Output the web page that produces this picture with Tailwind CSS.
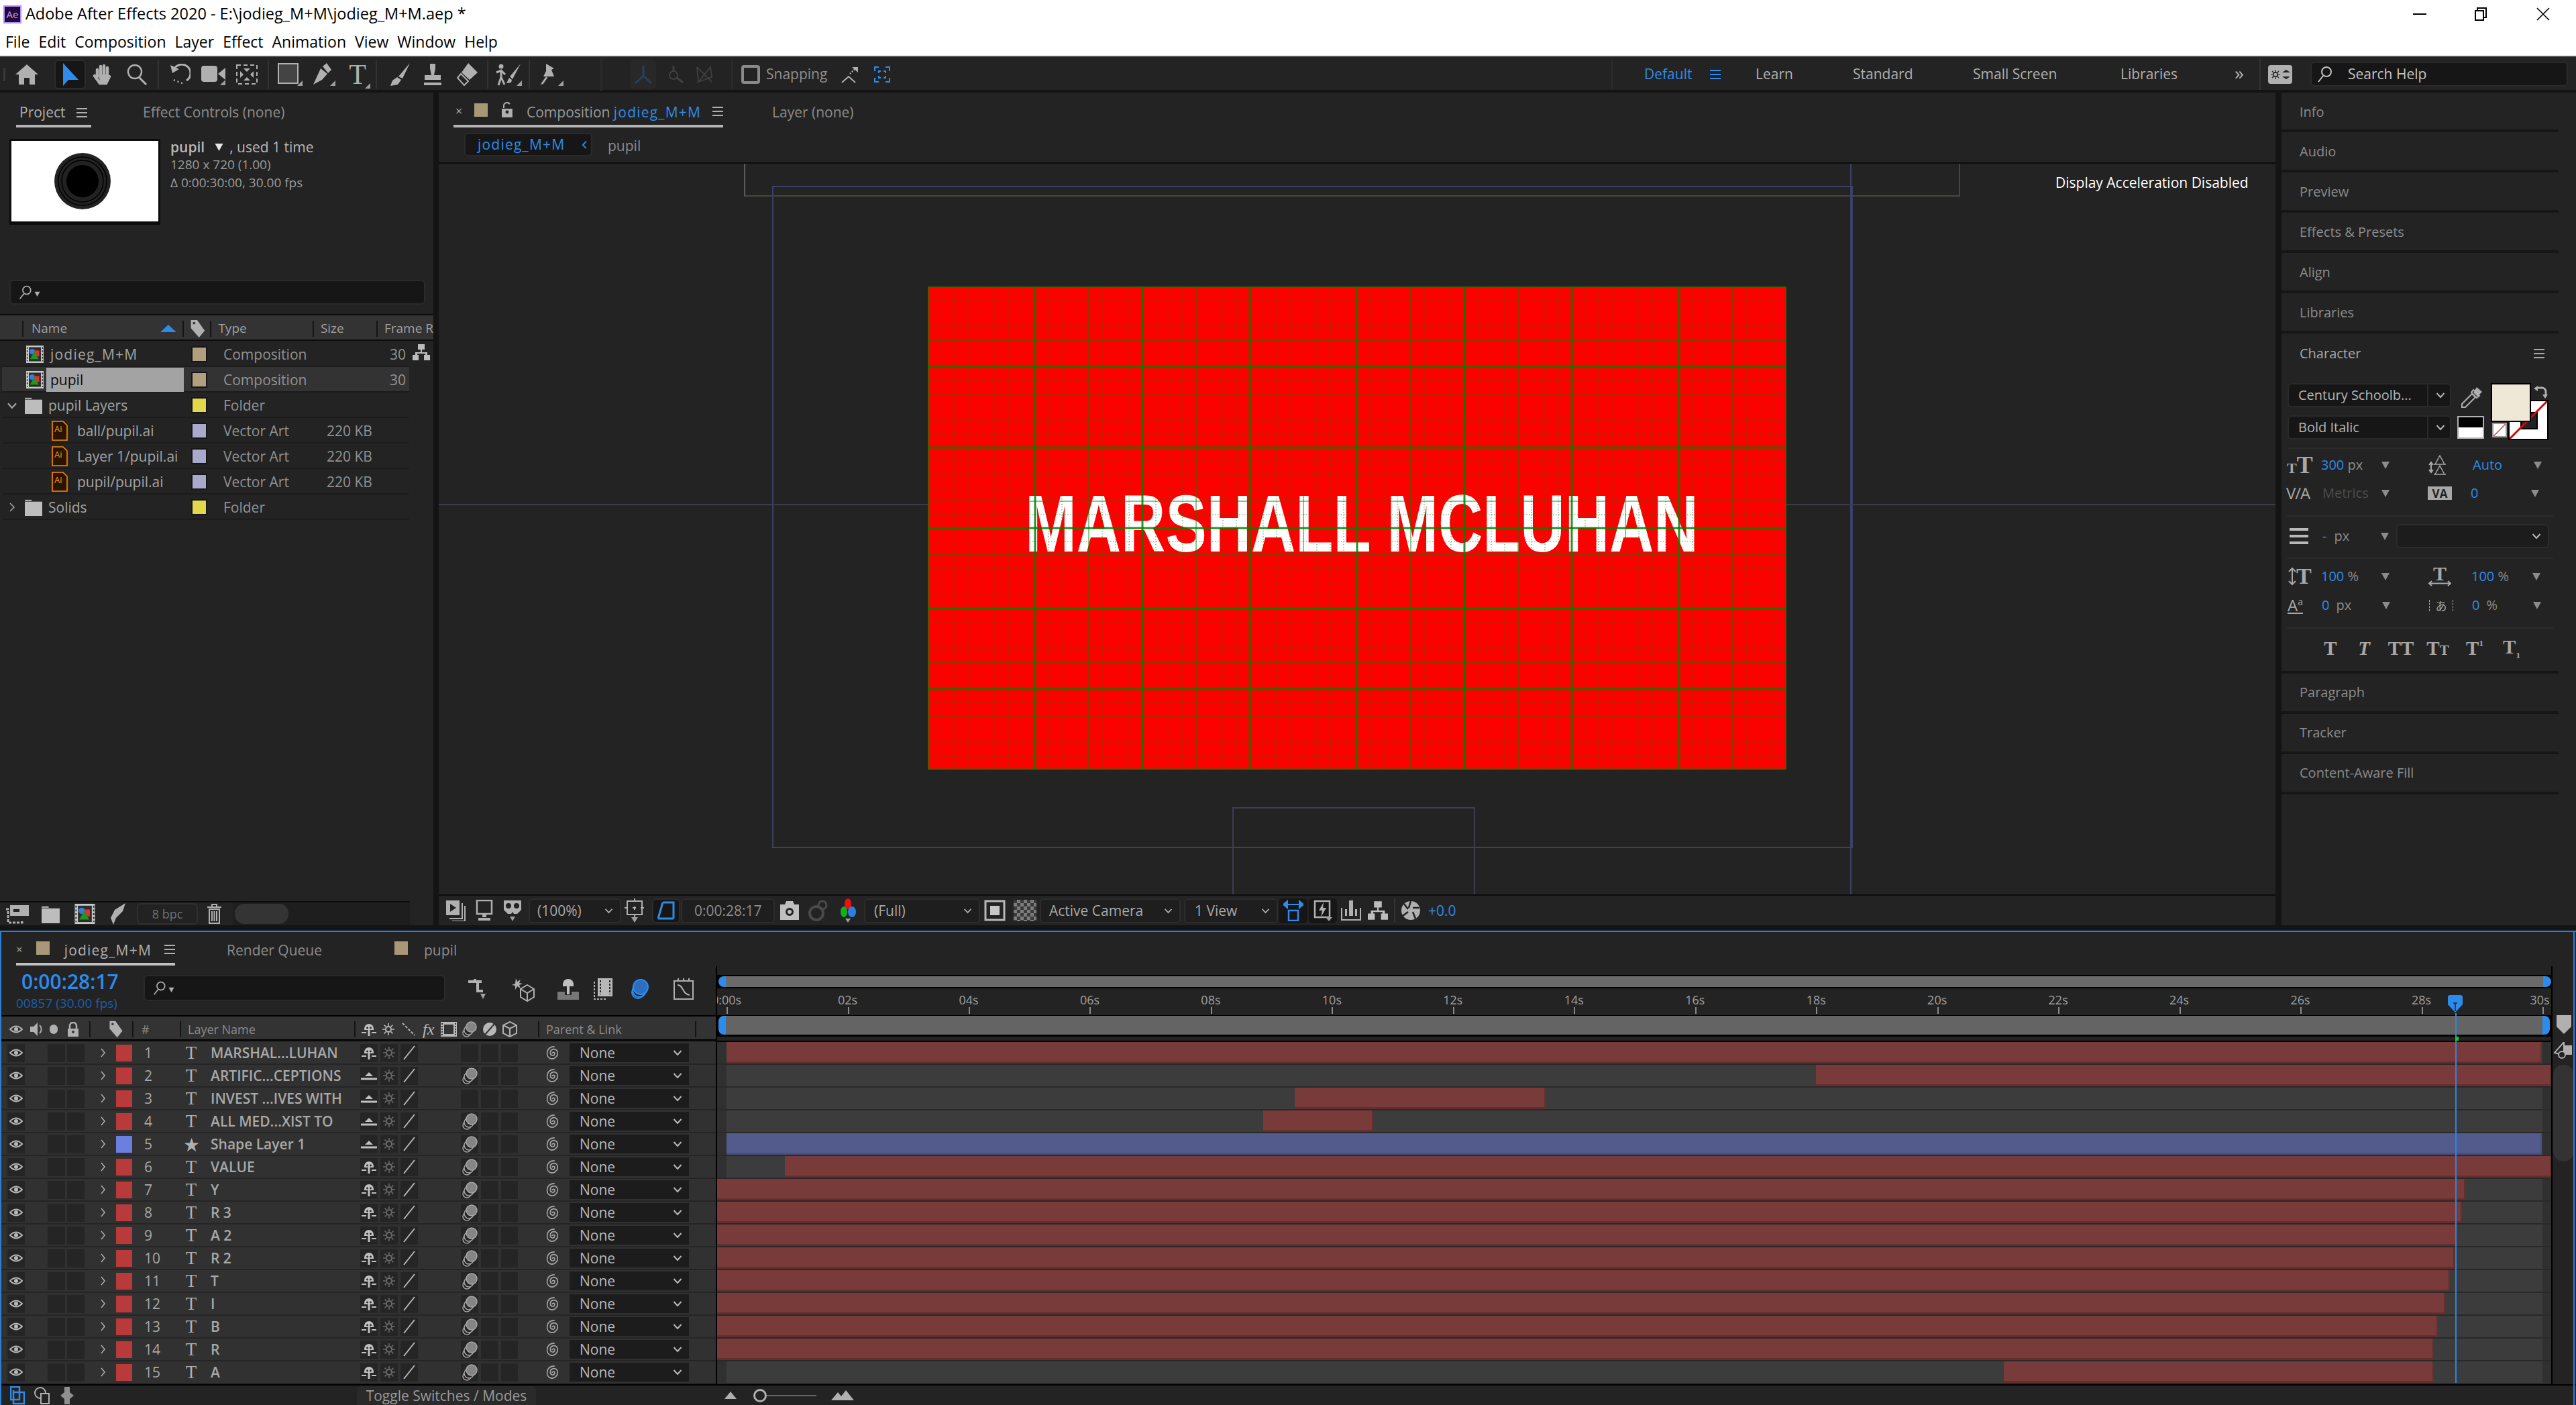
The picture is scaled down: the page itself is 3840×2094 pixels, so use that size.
<!DOCTYPE html>
<html lang="en">
  <head>
    <meta charset="UTF-8" />
    <title>Adobe After Effects 2020</title>
    <script src="https://cdn.jsdelivr.net/npm/@tailwindcss/browser@4"></script>
  </head>
  <body class="w-[3840px] h-[2094px] overflow-hidden bg-[#141414] font-['Open_Sans',sans-serif] text-[21px] leading-none text-[#a3a3a3]">
    <!-- shared icons -->
    <svg class="absolute w-0 h-0">
      <symbol id="tri" viewBox="0 0 12 12"><path d="M0 1H12L6 12Z" fill="currentColor" /></symbol>
      <symbol id="flyout" viewBox="0 0 8 8"><path d="M8 0V8H0Z" fill="#a0a0a0" /></symbol>
      <symbol id="chev" viewBox="0 0 14 10"><path d="M1.5 2L7 8L12.5 2" fill="none" stroke="currentColor" stroke-width="2" /></symbol>
      <symbol id="menu" viewBox="0 0 16 16"><path d="M0 2H16M0 8H16M0 14H16" stroke="currentColor" stroke-width="2" /></symbol>
      <symbol id="search" viewBox="0 0 26 26"><circle cx="14" cy="9" r="7" fill="none" stroke="currentColor" stroke-width="2" /><path d="M9 15L2 24" stroke="currentColor" stroke-width="2" /></symbol>
      <symbol id="eye" viewBox="0 0 20 12"><path d="M1 6Q10 -3 19 6Q10 15 1 6Z" fill="none" stroke="#b8b8b8" stroke-width="2" /><circle cx="10" cy="6" r="3" fill="#b8b8b8" /></symbol>
      <symbol id="shy" viewBox="0 0 24 20"><path d="M5 9A7 7 0 0 1 19 9V11H5Z" fill="#c0c0c0" /><path d="M12 11V20" stroke="#c0c0c0" stroke-width="3" /><path d="M1 15H8M16 15H23" stroke="#c0c0c0" stroke-width="2" /><circle cx="9.5" cy="8" r="1.4" fill="#252525" /><circle cx="14.5" cy="8" r="1.4" fill="#252525" /></symbol>
      <symbol id="shyoff" viewBox="0 0 24 20"><path d="M6 11L12 5L18 11Z" fill="#c0c0c0" /><path d="M0 15H24" stroke="#c0c0c0" stroke-width="3" /></symbol>
      <symbol id="sun" viewBox="0 0 18 18"><circle cx="9" cy="9" r="4" fill="none" stroke="currentColor" stroke-width="2" /><path d="M9 0V4M9 14V18M0 9H4M14 9H18M2.6 2.6L5.5 5.5M12.5 12.5L15.4 15.4M2.6 15.4L5.5 12.5M12.5 5.5L15.4 2.6" stroke="currentColor" stroke-width="1.6" /></symbol>
      <symbol id="slash" viewBox="0 0 24 22"><path d="M4 21L20 1" stroke="#b8b8b8" stroke-width="2" /></symbol>
      <symbol id="stack" viewBox="0 0 25 25"><circle cx="8" cy="18" r="6" fill="#252525" stroke="#a8a8a8" stroke-width="1.5" /><circle cx="11" cy="14" r="7" fill="#252525" stroke="#a8a8a8" stroke-width="1.5" /><circle cx="15" cy="9" r="8" fill="#858585" stroke="#a8a8a8" stroke-width="1.5" /></symbol>
      <symbol id="spiral" viewBox="0 0 24 24"><path d="M11 13C12 10 16 11 15 14C14 18 8 17 8 12C8 6 16 4 19 9C22 15 17 22 10 22C5 21 2 17 3 11C4 5 9 2 15 2" fill="none" stroke="#a8a8a8" stroke-width="1.8" /></symbol>
      <symbol id="comp" viewBox="0 0 32 32"><rect x="0" y="0" width="32" height="32" fill="#c8c8c8" /><rect x="5" y="3" width="22" height="26" fill="#2c2c2c" /><path d="M2 3V29M30 3V29" stroke="#2c2c2c" stroke-width="2" stroke-dasharray="3 3" /><circle cx="11" cy="11" r="5" fill="#2d7fe0" /><rect x="15" y="9" width="9" height="11" fill="#e03030" /><path d="M15 11L23 25H7Z" fill="#1a9a20" /></symbol>
      <symbol id="ai" viewBox="0 0 24 30"><path d="M1 1H17L23 7V29H1Z" fill="#2a1400" stroke="#ff8a00" stroke-width="1.6" /></symbol>
      <symbol id="folder" viewBox="0 0 28 28"><path d="M0 4H11V2H0Z" fill="#bdbdbd" /><rect x="0" y="5" width="28" height="23" fill="#bdbdbd" /></symbol>
      <symbol id="tag" viewBox="0 0 24 30"><path d="M1 1H11L23 18L14 29L1 14Z" fill="#b0b0b0" /><circle cx="6" cy="6" r="2" fill="#333" /></symbol>
      <symbol id="tree" viewBox="0 0 26 24"><path d="M8 0H18V8H14V12H22V16H26V24H17V16H19V14H7V16H9V24H0V16H4V12H12V8H8Z" fill="#bdbdbd" /></symbol>
    </svg>

    <!-- title and menu -->
    <div class="h-[42px] bg-white flex items-center text-black">
      <span class="ml-[5px] w-[27px] h-[27px] bg-[#1f0a3a] border-2 border-[#b48cff] text-[#c79aff] text-[15px] flex items-center justify-center">Ae</span>
      <span class="ml-[6px] text-[23.5px]">Adobe After Effects 2020 - E:\jodieg_M+M\jodieg_M+M.aep *</span>
      <svg class="ml-auto w-[20px] h-[20px]" viewBox="0 0 20 20"><path d="M0 10H20" stroke="#000" stroke-width="2" /></svg>
      <svg class="ml-[70px] w-[20px] h-[20px]" viewBox="0 0 20 20"><path d="M3 5H15V19H3ZM6 5V1H19V15H15" fill="none" stroke="#000" stroke-width="2" /></svg>
      <svg class="ml-[74px] mr-[39px] w-[20px] h-[20px]" viewBox="0 0 20 20"><path d="M1 1L19 19M19 1L1 19" stroke="#000" stroke-width="1.6" /></svg>
    </div>
    <div class="h-[40px] bg-white flex items-center gap-[13px] pl-[8px] text-black text-[23px]">
      <span>File</span><span>Edit</span><span>Composition</span><span>Layer</span><span>Effect</span><span>Animation</span><span>View</span><span>Window</span><span>Help</span>
    </div>
    <div class="h-[2px] bg-[#e6e6e6]"></div>

    <!-- tools -->
    <div class="h-[50px] pt-[3px] bg-[#232323] flex items-center text-[#b0b0b0]">
      <div class="w-[15px]"><div class="ml-[5px] w-[3px] h-[20px] bg-[#3a3a3a]"></div></div>
      <div class="w-[50px] flex justify-center"><svg class="w-[34px] h-[30px]" viewBox="0 0 34 30"><path d="M17 0L34 15H29V30H21V20H13V30H5V15H0Z" fill="#b0b0b0" /></svg></div>
      <div class="ml-[16px] w-[47px] h-[44px] bg-[#161616] border-2 border-[#2c2c2c] rounded-md flex items-center justify-center"><svg class="w-[25px] h-[34px]" viewBox="0 0 25 34"><path d="M2 0V34L10 25H25Z" fill="#2d8ceb" /></svg></div>
      <div class="w-[50px] flex justify-center"><svg class="w-[32px] h-[32px]" viewBox="0 0 32 32"><path d="M8 9V20M13 4V18M18 3V18M23 6V19M4 18L12 29H21L26 19" fill="none" stroke="#b0b0b0" stroke-width="4.5" stroke-linecap="round" /><path d="M10 16H24V27H12Z" fill="#b0b0b0" /></svg></div>
      <div class="w-[52px] flex justify-center"><svg class="w-[34px] h-[32px]" viewBox="0 0 34 32"><circle cx="14" cy="12" r="10" fill="none" stroke="#b0b0b0" stroke-width="2.4" /><path d="M20 20L31 31" stroke="#b0b0b0" stroke-width="3" /></svg></div>
      <div class="ml-[5px] mr-[5px] w-[2px] h-[42px] bg-[#333]"></div>
      <div class="w-[52px] flex justify-center"><svg class="w-[32px] h-[32px]" viewBox="0 0 32 32"><path d="M7 9A13 13 0 1 1 26 25" fill="none" stroke="#b0b0b0" stroke-width="3" /><path d="M2 2L5 14L15 8Z" fill="#b0b0b0" /><path d="M20 29L6 24" stroke="#b0b0b0" stroke-width="2.5" stroke-dasharray="2 4" /></svg></div>
      <div class="w-[48px] flex justify-center"><svg class="w-[36px] h-[32px]" viewBox="0 0 36 32"><rect x="0" y="3" width="24" height="24" rx="4" fill="#b0b0b0" /><path d="M25 15L36 6V24Z" fill="#b0b0b0" /><path d="M36 24V32H28Z" fill="#a0a0a0" /></svg></div>
      <div class="w-[52px] flex justify-center"><svg class="w-[32px] h-[30px]" viewBox="0 0 32 30"><rect x="1" y="1" width="30" height="28" fill="none" stroke="#b0b0b0" stroke-width="2" stroke-dasharray="6 4" /><path d="M11 6H21L16 11ZM11 24H21L16 19ZM6 10V20L11 15ZM26 10V20L21 15Z" fill="#b0b0b0" /></svg></div>
      <div class="ml-[5px] mr-[5px] w-[2px] h-[42px] bg-[#333]"></div>
      <div class="w-[52px] flex justify-center"><svg class="w-[38px] h-[34px]" viewBox="0 0 38 34"><rect x="2" y="1" width="29" height="29" fill="#444" stroke="#b0b0b0" stroke-width="2" /><path d="M38 26V34H30Z" fill="#a0a0a0" /></svg></div>
      <div class="w-[48px] flex justify-center"><svg class="w-[36px] h-[34px]" viewBox="0 0 36 34"><path d="M14 8L3 32L16 25L24 16ZM17 5L23 0L30 10L25 15Z" fill="#b0b0b0" /><path d="M36 26V34H28Z" fill="#a0a0a0" /></svg></div>
      <div class="w-[54px] flex justify-center items-center relative"><span class="font-['Liberation_Serif',serif] text-[42px] text-[#b0b0b0]">T</span><svg class="absolute right-[8px] bottom-0 w-[8px] h-[8px]"><use href="#flyout" /></svg></div>
      <div class="mr-[6px] w-[2px] h-[42px] bg-[#333]"></div>
      <div class="w-[56px] flex justify-center"><svg class="w-[34px] h-[34px]" viewBox="0 0 34 34"><path d="M32 0L15 20L21 23ZM13 21L6 26L3 34L14 32L19 25Z" fill="#b0b0b0" /></svg></div>
      <div class="w-[42px] flex justify-center"><svg class="w-[32px] h-[34px]" viewBox="0 0 32 34"><path d="M12 1H20V8L18 18H28V25H4V18H14L12 8ZM3 29H29V33H3Z" fill="#b0b0b0" /></svg></div>
      <div class="w-[60px] flex justify-center"><svg class="w-[32px] h-[34px]" viewBox="0 0 32 34"><path d="M18 0L32 14L20 25L8 14Z" fill="#b0b0b0" /><path d="M7 16L18 27L12 33L2 22Z" fill="none" stroke="#b0b0b0" stroke-width="2" /></svg></div>
      <div class="w-[2px] h-[42px] bg-[#333]"></div>
      <div class="w-[60px] flex justify-center"><svg class="w-[40px] h-[34px]" viewBox="0 0 40 34"><circle cx="9" cy="5" r="3.5" fill="#b0b0b0" /><path d="M9 10V21L5 33M9 21L14 32M2 14L9 11L15 17" fill="none" stroke="#b0b0b0" stroke-width="3" /><path d="M38 1L22 20L26 24ZM21 22L17 30L24 29L25 25Z" fill="#b0b0b0" /><path d="M40 26V34H32Z" fill="#a0a0a0" /></svg></div>
      <div class="w-[2px] h-[42px] bg-[#333]"></div>
      <div class="w-[62px] flex justify-center"><svg class="w-[38px] h-[34px]" viewBox="0 0 38 34"><path d="M12 1L24 8L20 10L24 20H8L12 12ZM13 21L8 30L3 33" fill="#b0b0b0" /><path d="M13 21L6 31" stroke="#b0b0b0" stroke-width="3" /><path d="M38 26V34H30Z" fill="#a0a0a0" /></svg></div>
      <div class="ml-[43px] w-[3px] h-[50px] bg-[#2a2a2a]"></div>
      <div class="ml-[41px] w-[39px] h-[44px] bg-[#282828] rounded-md flex items-center justify-center"><svg class="w-[30px] h-[30px]" viewBox="0 0 30 30"><path d="M15 2V17M15 17L3 28M15 17L27 28" stroke="#25415f" stroke-width="3" fill="none" /></svg></div>
      <div class="w-[60px] flex justify-center"><svg class="w-[24px] h-[26px]" viewBox="0 0 24 26"><circle cx="8" cy="14" r="6" fill="none" stroke="#414141" stroke-width="2" /><path d="M13 18L22 25M8 0V8" stroke="#414141" stroke-width="3" /></svg></div>
      <svg class="w-[24px] h-[28px]" viewBox="0 0 24 28"><path d="M1 3L3 25M3 25L23 18L21 3ZM1 3L23 25" fill="none" stroke="#3d3d3d" stroke-width="2" /></svg>
      <div class="ml-[28px] w-[2px] h-[42px] bg-[#2d2d2d]"></div>
      <div class="ml-[13px] w-[28px] h-[28px] border-4 border-[#8a8a8a] rounded"></div>
      <span class="ml-[9px] w-[92px] text-[#8f8f8f]">Snapping</span>
      <svg class="ml-[20px] w-[25px] h-[26px]" viewBox="0 0 25 26"><path d="M1 25L11 16L21 25" fill="none" stroke="#b0b0b0" stroke-width="2" /><path d="M13 12L20 5" stroke="#b0b0b0" stroke-width="2" stroke-dasharray="2 2" /><path d="M16 2H25V10Z" fill="#b0b0b0" /></svg>
      <svg class="ml-[24px] w-[24px] h-[24px]" viewBox="0 0 24 24"><path d="M7 1H1V7M17 1H23V7M7 23H1V17M17 23H23V17M10 7H7V10M14 7H17V10M10 17H7V14M14 17H17V14" fill="none" stroke="#2d8ceb" stroke-width="2" /></svg>
      <div class="ml-[1075px] w-[2px] h-[42px] bg-[#2d2d2d]"></div>
      <span class="ml-[47px] w-[98px] text-[#2d8ceb]">Default</span>
      <svg class="w-[16px] h-[16px] text-[#2d8ceb]"><use href="#menu" /></svg>
      <span class="ml-[52px] w-[145px]">Learn</span>
      <span class="w-[179px]">Standard</span>
      <span class="w-[220px]">Small Screen</span>
      <span class="w-[170px]">Libraries</span>
      <span class="w-[37px] text-[28px] -mt-[6px]">»</span>
      <div class="w-[2px] h-[47px] bg-[#333]"></div>
      <div class="ml-[11px] w-[36px] h-[28px] bg-[#b0b0b0] rounded-sm flex items-center justify-center gap-[3px]"><svg class="w-[14px] h-[14px] text-[#232323]"><use href="#sun" /></svg><svg class="w-[12px] h-[14px]" viewBox="0 0 12 14"><path d="M6 0L0 4H12ZM6 14L12 10H0Z" fill="#232323" /></svg></div>
      <div class="ml-[27px] w-[384px] h-[37px] bg-[#161616] border-2 border-[#2a2a2a] rounded-md flex items-center pl-[8px] text-[#c4c4c4]">
        <svg class="w-[26px] h-[26px]"><use href="#search" /></svg><span class="ml-[20px]">Search Help</span>
      </div>
    </div>
    <div class="h-[4px]"></div>

    <!-- panels -->
    <div class="h-[1241px] flex">
      <!-- project -->
      <div class="w-[646px] h-full bg-[#232323] flex flex-col">
        <div class="h-[52px] flex items-end pl-[24px] relative shrink-0">
          <div class="w-[112px] h-[52px] border-b-4 border-[#b4b4b4] flex items-start pt-[19px] gap-[16px] pl-[5px] text-[#b0b0b0]"><span>Project</span><svg class="w-[16px] h-[16px] mt-[3px]"><use href="#menu" /></svg></div>
          <span class="ml-[77px] self-start mt-[19px] text-[#8c8c8c]">Effect Controls (none)</span>
        </div>
        <div class="mt-[17px] ml-[14px] flex h-[128px] shrink-0">
          <div class="w-[225px] h-full bg-white border-[3px] border-[#0c0c0c] border-b-[5px] flex items-center justify-center pr-[8px]">
            <svg class="w-[90px] h-[90px]" viewBox="0 0 90 90"><circle cx="45" cy="45" r="42" fill="#222" /><circle cx="45" cy="45" r="36" fill="none" stroke="#000" stroke-width="1.5" /><circle cx="45" cy="45" r="31" fill="none" stroke="#000" stroke-width="1.5" /><circle cx="45" cy="45" r="24" fill="#000" /></svg>
          </div>
          <div class="ml-[15px] flex flex-col">
            <div class="flex items-center h-[24px] text-[#b8b8b8]"><span class="font-semibold">pupil</span><svg class="ml-[14px] mr-[8px] w-[15px] h-[12px] text-[#e6e6e6]"><use href="#tri" /></svg><span>, used 1 time</span></div>
            <div class="mt-[5px] text-[19px] text-[#9c9c9c]">1280 x 720 (1.00)</div>
            <div class="mt-[8px] text-[19px] text-[#9c9c9c]">Δ 0:00:30:00, 30.00 fps</div>
          </div>
        </div>
        <div class="mt-[82px] ml-[14px] w-[620px] h-[37px] bg-[#161616] border-2 border-[#2a2a2a] rounded-md flex items-center pl-[12px] shrink-0">
          <svg class="w-[22px] h-[22px] text-[#b0b0b0]"><use href="#search" /></svg><svg class="w-[11px] h-[8px] mt-[5px] text-[#b0b0b0]"><use href="#tri" /></svg>
        </div>
        <div class="mt-[14px] h-[40px] pt-[3px] border-y-2 border-[#0c0c0c] bg-[#333] flex items-center text-[19px] text-[#a0a0a0] shrink-0 overflow-hidden">
          <div class="ml-[33px] w-[2px] h-[24px] bg-[#141414]"></div><span class="ml-[12px] w-[194px]">Name</span><svg class="w-[24px] h-[11px] text-[#2d8ceb]" viewBox="0 0 24 11"><path d="M12 0L24 11H0Z" fill="currentColor" /></svg>
          <div class="ml-[9px] w-[2px] h-[24px] bg-[#141414]"></div><svg class="ml-[9px] w-[24px] h-[28px]"><use href="#tag" /></svg>
          <div class="ml-[7px] w-[2px] h-[24px] bg-[#141414]"></div><span class="ml-[10px] w-[142px]">Type</span>
          <div class="w-[2px] h-[24px] bg-[#141414]"></div><span class="ml-[10px] w-[84px]">Size</span>
          <div class="w-[2px] h-[24px] bg-[#141414]"></div><span class="ml-[10px] whitespace-nowrap">Frame R</span>
        </div>
        <div id="project-rows" class="ml-[3px] mt-[1px]"></div>
        <div class="flex-1"></div>
        <div class="h-[2px] w-[611px] bg-[#0c0c0c]"></div>
        <div class="h-[34px] flex items-center bg-[#232323]">
          <svg class="ml-[9px] w-[34px] h-[30px]" viewBox="0 0 34 30"><path d="M6 2H34V18H6Z" fill="#b0b0b0" /><path d="M11 8H20V12H11Z" fill="#232323" /><path d="M0 8H3V28H24V24" fill="none" stroke="#b0b0b0" stroke-width="3" stroke-dasharray="4 2" /></svg>
          <svg class="ml-[19px] w-[27px] h-[27px]"><use href="#folder" /></svg>
          <svg class="ml-[21px] w-[33px] h-[30px]"><use href="#comp" /></svg>
          <svg class="ml-[18px] w-[26px] h-[32px]" viewBox="0 0 26 32"><path d="M26 0L10 10L4 22L8 32L12 22L22 12Z" fill="#b0b0b0" /></svg>
          <div class="ml-[17px] w-[91px] h-[32px] border-2 border-[#2f2f2f] bg-[#222] rounded-md flex items-center justify-center text-[18px] text-[#6d7278]">8 bpc</div>
          <svg class="ml-[13px] w-[23px] h-[30px]" viewBox="0 0 23 30"><path d="M1 5H22M8 5V1H15V5M4 8V29H19V8Z" fill="none" stroke="#b0b0b0" stroke-width="2" /><path d="M8 11V26M11.5 11V26M15 11V26" stroke="#b0b0b0" stroke-width="2" /></svg>
          <div class="ml-[16px] h-full w-[264px] bg-[#1e1e1e] flex items-center"><div class="ml-[3px] w-[80px] h-[30px] bg-[#343434] rounded-[14px]"></div></div>
        </div>
      </div>

      <!-- composition -->
      <div class="ml-[8px] w-[2738px] h-full bg-[#232323] flex flex-col">
        <div class="h-[52px] shrink-0 flex items-start pl-[22px] relative">
          <div class="w-[402px] h-[52px] border-b-4 border-[#b4b4b4] flex items-start">
            <span class="ml-[3px] mt-[18px] text-[18px]">×</span>
            <div class="ml-[18px] mt-[16px] w-[20px] h-[20px] bg-[#a89878]"></div>
            <svg class="ml-[20px] mt-[14px] w-[18px] h-[24px]" viewBox="0 0 18 24"><path d="M4 9V5A5 5 0 0 1 13 3" fill="none" stroke="#b0b0b0" stroke-width="2" /><path d="M1 10H17V23H1Z" fill="#b0b0b0" /><circle cx="9" cy="15" r="2.5" fill="#232323" /></svg>
            <span class="ml-[20px] mt-[19px] text-[#9a9a9a] whitespace-nowrap">Composition <span class="text-[#2d8ceb] tracking-[1.2px]">jodieg_M+M</span></span>
            <svg class="ml-[17px] mt-[20px] w-[16px] h-[16px] text-[#b0b0b0]"><use href="#menu" /></svg>
          </div>
          <span class="ml-[73px] mt-[19px] text-[#8c8c8c]">Layer (none)</span>
        </div>
        <div class="h-[54px] pt-[3px] shrink-0 flex items-center pl-[38px] border-b-2 border-[#0c0c0c]">
          <div class="w-[191px] h-[35px] -mt-[4px] bg-[#161616] border-2 border-[#2a2a2a] rounded-md flex items-center pl-[18px] text-[#2d8ceb]"><span class="w-[155px] tracking-[1.2px]">jodieg_M+M</span><span class="font-['Liberation_Sans',sans-serif] text-[26px] -mt-[4px]">‹</span></div>
          <span class="ml-[23px] text-[#8c8c8c]">pupil</span>
        </div>
        <!-- viewer -->
        <div class="relative flex-1 overflow-hidden">
          <div class="absolute left-[455px] top-0 w-[1813px] h-[49px] border-l-2 border-r-2 border-b-2 border-[#4a463c] border-l-[#5a5a5a]"></div>
          <div class="absolute left-[497px] top-[33px] w-[1611px] h-[987px] border-2 border-[#3c3f66]"></div>
          <div class="absolute left-[1183px] top-[959px] w-[362px] h-[140px] border-2 border-[#3c3d50]"></div>
          <div class="absolute left-0 top-[507px] w-full h-[2px] bg-[#3a3b46]"></div>
          <div class="absolute left-[2104px] top-0 w-[2px] h-full bg-[#3c3f66]"></div>
          <div class="absolute left-[729px] top-[183px] w-[1280px] h-[720px] bg-[#ff0000] overflow-hidden flex items-center justify-center">
            <span class="whitespace-nowrap font-['Liberation_Sans',sans-serif] font-bold text-[121px] leading-none text-white scale-x-[0.759] translate-x-[7px] -translate-y-[7px]">MARSHALL MCLUHAN</span>
            <svg id="grid" class="absolute inset-0 w-[1280px] h-[720px]" viewBox="0 0 1280 720"></svg>
          </div>
          <span class="absolute left-[2410px] top-[18px] text-white text-[21px]">Display Acceleration Disabled</span>
        </div>
        <!-- viewer controls -->
        <div class="h-[46px] shrink-0 border-t-2 border-[#0c0c0c] flex items-center text-[#a8a8a8]">
          <svg class="ml-[10px] w-[30px] h-[32px]" viewBox="0 0 30 32"><path d="M1 1H21V23H1Z" fill="#b0b0b0" /><path d="M7 6L16 12L7 18Z" fill="#232323" /><path d="M25 5V28H6M29 9V32H10" fill="none" stroke="#b0b0b0" stroke-width="2" /></svg>
          <svg class="ml-[13px] w-[30px] h-[32px]" viewBox="0 0 30 32"><rect x="4" y="1" width="22" height="20" fill="none" stroke="#b0b0b0" stroke-width="2.5" /><path d="M12 22H18V26H12ZM6 27H24V31H6Z" fill="#b0b0b0" /></svg>
          <svg class="ml-[12px] w-[30px] h-[34px]" viewBox="0 0 30 34"><path d="M2 2H28V16L22 22H17L15 19L13 22H8L2 16Z" fill="#b0b0b0" /><circle cx="9" cy="10" r="4" fill="#232323" /><circle cx="21" cy="10" r="4" fill="#232323" /><path d="M11 26H19L15 33Z" fill="#a0a0a0" /></svg>
          <div class="ml-[9px] w-[138px] h-[37px] bg-[#1e1e1e] border-2 border-[#2c2c2c] rounded-md flex items-center pl-[11px]"><span class="flex-1">(100%)</span><svg class="w-[13px] h-[9px] mr-[10px]"><use href="#chev" /></svg></div>
          <svg class="ml-[5px] w-[30px] h-[36px]" viewBox="0 0 30 36"><rect x="4" y="4" width="22" height="20" fill="none" stroke="#b0b0b0" stroke-width="2" /><path d="M15 0V28M0 14H30" stroke="#b0b0b0" stroke-width="2" stroke-dasharray="5 7" /><path d="M10 28H20L15 36Z" fill="#a0a0a0" /></svg>
          <div class="ml-[11px] w-[42px] h-[37px] bg-[#161616] border-2 border-[#2c2c2c] rounded-md flex items-center justify-center"><svg class="w-[26px] h-[30px]" viewBox="0 0 26 30"><path d="M8 3L1 27M8 3H24V27M1 27H24" fill="none" stroke="#2d8ceb" stroke-width="3" /></svg></div>
          <div class="ml-[1px] w-[140px] h-[37px] bg-[#1e1e1e] border-2 border-[#2c2c2c] rounded-md flex items-center pl-[18px] text-[21px] text-[#8c8c8c]">0:00:28:17</div>
          <svg class="ml-[5px] w-[34px] h-[30px]" viewBox="0 0 34 30"><path d="M3 6H10L12 1H22L24 6H31V29H3Z" fill="#c0c0c0" /><circle cx="17" cy="17" r="6" fill="#232323" /><circle cx="17" cy="17" r="3" fill="#c0c0c0" /></svg>
          <svg class="ml-[10px] w-[32px] h-[32px]" viewBox="0 0 32 32"><circle cx="13" cy="20" r="10" fill="none" stroke="#4a4a4a" stroke-width="4" /><circle cx="22" cy="8" r="6" fill="none" stroke="#4a4a4a" stroke-width="3" /></svg>
          <svg class="ml-[12px] w-[32px] h-[36px]" viewBox="0 0 32 36"><ellipse cx="16" cy="8" rx="5" ry="8" fill="#f01010" /><ellipse cx="10" cy="20" rx="5" ry="8" fill="#10b020" /><ellipse cx="22" cy="20" rx="6" ry="8" fill="#2d7fe0" /><path d="M12 30H20L16 36Z" fill="#a0a0a0" /></svg>
          <div class="ml-[8px] w-[173px] h-[37px] bg-[#1e1e1e] border-2 border-[#2c2c2c] rounded-md flex items-center pl-[13px]"><span class="flex-1">(Full)</span><svg class="w-[13px] h-[9px] mr-[10px]"><use href="#chev" /></svg></div>
          <svg class="ml-[5px] w-[34px] h-[32px]" viewBox="0 0 34 32"><rect x="3" y="2" width="28" height="28" fill="none" stroke="#b8b8b8" stroke-width="3" /><rect x="10" y="9" width="14" height="14" fill="#c8c8c8" /></svg>
          <div class="ml-[11px] w-[34px] h-[32px] bg-[repeating-conic-gradient(#7c7c7c_0_25%,#3a3a3a_0_50%)] bg-[length:10px_10px]"></div>
          <div class="ml-[5px] w-[210px] h-[37px] bg-[#1e1e1e] border-2 border-[#2c2c2c] rounded-md flex items-center pl-[12px]"><span class="flex-1">Active Camera</span><svg class="w-[13px] h-[9px] mr-[10px]"><use href="#chev" /></svg></div>
          <div class="ml-[5px] w-[140px] h-[37px] bg-[#1e1e1e] border-2 border-[#2c2c2c] rounded-md flex items-center pl-[14px]"><span class="flex-1">1 View</span><svg class="w-[13px] h-[9px] mr-[10px]"><use href="#chev" /></svg></div>
          <div class="ml-[1px] w-[43px] h-[37px] bg-[#161616] rounded-md flex items-center justify-center"><svg class="w-[30px] h-[32px]" viewBox="0 0 30 32"><path d="M0 7L6 2V12ZM30 7L24 2V12ZM6 7H24" fill="#2d8ceb" stroke="#2d8ceb" stroke-width="2" /><rect x="8" y="16" width="14" height="15" fill="none" stroke="#2d8ceb" stroke-width="2.5" /></svg></div>
          <div class="ml-[2px] w-[42px] h-[37px] bg-[#161616] rounded-md flex items-center justify-center"><svg class="w-[28px] h-[32px]" viewBox="0 0 28 32"><rect x="2" y="2" width="22" height="24" fill="none" stroke="#b0b0b0" stroke-width="2.5" /><path d="M15 4L8 16H13L11 26L19 12H14Z" fill="#b0b0b0" /><path d="M18 26H28L23 32Z" fill="#a0a0a0" /></svg></div>
          <svg class="ml-[6px] w-[30px] h-[32px]" viewBox="0 0 30 32"><path d="M1 12V30H29V12M1 30H29" fill="none" stroke="#b0b0b0" stroke-width="2" /><path d="M12 1H18V24H12ZM6 14H9V24H6ZM21 14H24V24H21Z" fill="#b0b0b0" /></svg>
          <svg class="ml-[10px] w-[30px] h-[30px]"><use href="#tree" /></svg>
          <div class="ml-[9px] w-[2px] h-[36px] bg-[#333]"></div>
          <svg class="ml-[8px] w-[30px] h-[32px]" viewBox="0 0 30 32"><circle cx="15" cy="16" r="14" fill="#b0b0b0" /><path d="M15 2L12 12M28 12L18 12M22 28L18 18M3 24L11 18M5 6L11 14" stroke="#232323" stroke-width="2.5" /></svg>
          <span class="ml-[11px] text-[#2d8ceb]">+0.0</span>
        </div>
      </div>

      <!-- right panels -->
      <div class="ml-[9px] w-[439px] h-full bg-[#232323] flex flex-col">
        <div class="h-[59px] pt-[2px] w-[413px] border-b-4 border-[#161616] pl-[27px] flex items-center text-[20px] text-[#8c8c8c]">Info</div>
        <div class="h-[60px] pt-[2px] w-[413px] border-b-4 border-[#161616] pl-[27px] flex items-center text-[20px] text-[#8c8c8c]">Audio</div>
        <div class="h-[60px] pt-[2px] w-[413px] border-b-4 border-[#161616] pl-[27px] flex items-center text-[20px] text-[#8c8c8c]">Preview</div>
        <div class="h-[60px] pt-[2px] w-[413px] border-b-4 border-[#161616] pl-[27px] flex items-center text-[20px] text-[#8c8c8c]">Effects &amp; Presets</div>
        <div class="h-[60px] pt-[2px] w-[413px] border-b-4 border-[#161616] pl-[27px] flex items-center text-[20px] text-[#8c8c8c]">Align</div>
        <div class="h-[60px] pt-[2px] w-[413px] border-b-4 border-[#161616] pl-[27px] flex items-center text-[20px] text-[#8c8c8c]">Libraries</div>

        <!-- character -->
        <div class="h-[507px] w-[413px] border-b-4 border-[#161616] relative">
          <div class="h-[60px] pl-[27px] pr-[21px] flex items-center justify-between text-[20px] text-[#a8a8a8]">Character<svg class="w-[16px] h-[16px]"><use href="#menu" /></svg></div>
          <div class="mt-[14px] ml-[9px] w-[244px] flex flex-col gap-[12px] text-[20px] text-[#b4b4b4]">
            <div class="h-[36px] bg-[#161616] border-2 border-[#2a2a2a] rounded-md flex items-center pl-[14px]"><span class="w-[192px] whitespace-nowrap">Century Schoolb...</span><div class="w-[2px] h-full bg-[#2a2a2a]"></div><svg class="ml-[11px] w-[14px] h-[10px]"><use href="#chev" /></svg></div>
            <div class="h-[36px] bg-[#161616] border-2 border-[#2a2a2a] rounded-md flex items-center pl-[14px]"><span class="w-[192px]">Bold Italic</span><div class="w-[2px] h-full bg-[#2a2a2a]"></div><svg class="ml-[11px] w-[14px] h-[10px]"><use href="#chev" /></svg></div>
          </div>
          <!-- colour swatches -->
          <svg class="absolute left-[266px] top-[79px] w-[34px] h-[34px]" viewBox="0 0 34 34"><path d="M20 5L29 14L25 17L17 9ZM18 11L23 16L8 31H3V26Z" fill="none" stroke="#b0b0b0" stroke-width="2" /><path d="M20 9L25 1L33 8L26 15Z" fill="#b0b0b0" /></svg>
          <div class="absolute left-[262px] top-[123px] w-[40px] h-[34px] border-2 border-[#b0b0b0] flex flex-col"><div class="h-1/2 bg-black"></div><div class="h-1/2 bg-white"></div></div>
          <div class="absolute left-[314px] top-[133px] w-[22px] h-[22px] bg-white border-2 border-[#999]"><svg class="w-full h-full" viewBox="0 0 18 18"><path d="M0 18L18 0" stroke="#d04040" stroke-width="1.5" /></svg></div>
          <div class="absolute left-[338px] top-[99px] w-[60px] h-[60px] bg-white border-2 border-black overflow-hidden"><div class="absolute left-[16px] top-[16px] w-[26px] h-[26px] bg-[#232323] border-2 border-black"></div><svg class="absolute inset-0 w-[56px] h-[56px]" viewBox="0 0 56 56"><path d="M0 56L56 0" stroke="#cc0808" stroke-width="3" /></svg></div>
          <div class="absolute left-[312px] top-[74px] w-[60px] h-[58px] bg-[#efe8d7] border-2 border-black"></div>
          <svg class="absolute left-[375px] top-[78px] w-[22px] h-[20px]" viewBox="0 0 22 20"><path d="M5 3H14A6 6 0 0 1 19 9V14" fill="none" stroke="#b0b0b0" stroke-width="3" /><path d="M7 0V8L1 4ZM14 13H22L18 19Z" fill="#b0b0b0" /></svg>

          <div class="mt-[12px] mx-[8px] h-[2px] bg-[#2b2b2b]"></div>
          <div class="mt-[12px] ml-[8px] h-[24px] flex items-center text-[20px] text-[#8c8c8c]">
            <div class="w-[51px] font-['Liberation_Serif',serif] font-bold text-[#a8a8a8] whitespace-nowrap"><span class="text-[22px]">T</span><span class="text-[36px]">T</span></div>
            <div class="w-[90px] whitespace-nowrap"><span class="text-[#2d8ceb]">300</span> px</div><svg class="w-[12px] h-[12px]"><use href="#tri" /></svg>
            <svg class="ml-[58px] w-[32px] h-[30px]" viewBox="0 0 32 30"><path d="M17 1L10 14H24ZM17 16L10 29H24ZM8 14H26M8 29H26" fill="none" stroke="#a8a8a8" stroke-width="1.5" /><path d="M4 11V26M1 15L4 11L7 15M1 22L4 26L7 22" fill="none" stroke="#a8a8a8" stroke-width="2" /></svg>
            <span class="ml-[34px] w-[91px] text-[#2d8ceb]">Auto</span><svg class="w-[12px] h-[12px]"><use href="#tri" /></svg>
          </div>
          <div class="mt-[18px] ml-[7px] h-[24px] flex items-center text-[20px] text-[#8c8c8c]">
            <div class="w-[54px] text-[#a8a8a8] whitespace-nowrap tracking-[-1px] text-[24px]">V/A</div>
            <span class="w-[88px] text-[#4c4c4c]">Metrics</span><svg class="w-[12px] h-[12px]"><use href="#tri" /></svg>
            <div class="ml-[57px] w-[36px] h-[20px] bg-[#a8a8a8] text-[#232323] font-bold text-[17px] flex items-center justify-center">VA</div>
            <span class="ml-[28px] w-[90px] text-[#2d8ceb]">0</span><svg class="w-[12px] h-[12px]"><use href="#tri" /></svg>
          </div>
          <div class="mt-[21px] mx-[8px] h-[2px] bg-[#2b2b2b]"></div>
          <div class="mt-[11px] ml-[12px] h-[36px] flex items-center text-[20px] text-[#8c8c8c]">
            <svg class="w-[28px] h-[24px]" viewBox="0 0 28 24"><path d="M0 2H28M0 12H28M0 22H28" stroke="#b8b8b8" stroke-width="4" /></svg>
            <div class="ml-[21px] w-[87px]"><span class="text-[#2d8ceb]">-</span><span class="ml-[11px]">px</span></div><svg class="w-[12px] h-[12px]"><use href="#tri" /></svg>
            <div class="ml-[11px] w-[228px] h-[36px] bg-[#1c1c1c] border-2 border-[#2c2c2c] rounded-md flex items-center justify-end pr-[10px] text-[#b8b8b8]"><svg class="w-[14px] h-[10px]"><use href="#chev" /></svg></div>
          </div>
          <div class="mt-[14px] mx-[8px] h-[2px] bg-[#2b2b2b]"></div>
          <div class="mt-[14px] ml-[10px] h-[24px] flex items-center text-[20px] text-[#8c8c8c]">
            <div class="w-[49px] flex items-center"><svg class="w-[12px] h-[28px]" viewBox="0 0 12 28"><path d="M6 2V26M1 7L6 2L11 7M1 21L6 26L11 21" fill="none" stroke="#a8a8a8" stroke-width="2" /></svg><span class="font-['Liberation_Serif',serif] font-bold text-[34px] text-[#a8a8a8]">T</span></div>
            <div class="w-[90px] whitespace-nowrap"><span class="text-[#2d8ceb]">100</span> %</div><svg class="w-[12px] h-[12px]"><use href="#tri" /></svg>
            <div class="ml-[58px] w-[34px] flex flex-col items-center text-[#a8a8a8]"><span class="font-['Liberation_Serif',serif] font-bold text-[30px] leading-[20px]">T</span><svg class="w-[34px] h-[9px]" viewBox="0 0 34 9"><path d="M1 4.5H33M5 1L1 4.5L5 8M29 1L33 4.5L29 8" fill="none" stroke="#a8a8a8" stroke-width="2" /></svg></div>
            <div class="ml-[30px] w-[91px] whitespace-nowrap"><span class="text-[#2d8ceb]">100</span> %</div><svg class="w-[12px] h-[12px]"><use href="#tri" /></svg>
          </div>
          <div class="mt-[19px] ml-[9px] h-[24px] flex items-center text-[20px] text-[#8c8c8c]">
            <div class="w-[51px] text-[#a8a8a8] text-[24px] underline">A<span class="text-[14px] align-top">a</span></div>
            <div class="w-[90px] whitespace-nowrap"><span class="text-[#2d8ceb]">0</span><span class="ml-[10px]">px</span></div><svg class="w-[12px] h-[12px]"><use href="#tri" /></svg>
            <div class="ml-[58px] w-[36px] text-center font-['Noto_Sans_CJK_JP',sans-serif] text-[17px] text-[#a8a8a8] border-x border-dashed border-[#a8a8a8]">あ</div>
            <div class="ml-[28px] w-[91px] whitespace-nowrap"><span class="text-[#2d8ceb]">0</span><span class="ml-[10px]">%</span></div><svg class="w-[12px] h-[12px]"><use href="#tri" /></svg>
          </div>
          <div class="mt-[21px] mx-[8px] h-[2px] bg-[#2b2b2b]"></div>
          <div class="mt-[16px] h-[26px] flex items-center font-['Liberation_Serif',serif] font-bold text-[29px] text-[#a8a8a8]">
            <span class="ml-[48px] w-[50px] text-center">T</span><span class="w-[50px] text-center italic">T</span><span class="w-[60px] text-center">TT</span><span class="w-[50px] text-center">T<span class="text-[21px]">T</span></span><span class="w-[60px] text-center">T<span class="text-[13px] align-top">1</span></span><span class="w-[50px] text-center">T<span class="text-[13px] align-sub">1</span></span>
          </div>
        </div>
        <div class="h-[60px] w-[413px] border-b-4 border-[#161616] pl-[27px] flex items-center text-[20px] text-[#8c8c8c]">Paragraph</div>
        <div class="h-[60px] w-[413px] border-b-4 border-[#161616] pl-[27px] flex items-center text-[20px] text-[#8c8c8c]">Tracker</div>
        <div class="h-[60px] w-[413px] border-b-4 border-[#161616] pl-[27px] flex items-center text-[20px] text-[#8c8c8c]">Content-Aware Fill</div>
      </div>
    </div>

    <div class="h-[8px]"></div>

    <!-- timeline -->
    <div class="relative h-[707px] bg-[#232323] border-t-2 border-[#2b7fd6]">
      <div class="absolute left-0 top-0 w-[2px] h-full bg-[#2b7fd6]"></div>
      <div class="absolute left-[3836px] top-0 w-[2px] h-full bg-[#2b7fd6]"></div>

      <!-- tabs -->
      <div class="h-[51px] flex items-start pl-[24px]">
        <div class="w-[237px] h-[50px] border-b-4 border-[#c0c0c0] flex items-start">
          <span class="ml-[0px] mt-[17px] text-[17px]">×</span>
          <div class="ml-[20px] mt-[14px] w-[20px] h-[20px] bg-[#a89878]"></div>
          <span class="ml-[22px] mt-[17px] text-[#b0b0b0] tracking-[1.2px]">jodieg_M+M</span>
          <svg class="ml-[19px] mt-[18px] w-[16px] h-[16px] text-[#b0b0b0]"><use href="#menu" /></svg>
        </div>
        <span class="ml-[77px] mt-[17px] text-[#8c8c8c]">Render Queue</span>
        <div class="ml-[108px] mt-[14px] w-[20px] h-[20px] bg-[#a89878]"></div>
        <span class="ml-[24px] mt-[17px] text-[#8c8c8c]">pupil</span>
      </div>

      <div class="h-[623px] flex">
        <!-- layer outline -->
        <div class="w-[1067px] shrink-0">
          <div class="h-[73px] flex items-center relative">
            <div class="ml-[24px] w-[190px] flex flex-col items-start">
              <span class="ml-[8px] text-[30px] font-semibold text-[#2d8ceb]">0:00:28:17</span>
              <span class="mt-[8px] text-[19px] text-[#1a5fb0] whitespace-nowrap">00857 (30.00 fps)</span>
            </div>
            <div class="w-[450px] h-[39px] -mt-[8px] bg-[#161616] border-2 border-[#2a2a2a] rounded-md flex items-center pl-[12px]"><svg class="w-[22px] h-[22px] text-[#b0b0b0]"><use href="#search" /></svg><svg class="w-[11px] h-[8px] mt-[5px] text-[#b0b0b0]"><use href="#tri" /></svg></div>
            <svg class="ml-[32px] w-[30px] h-[34px] -mt-[6px]" viewBox="0 0 30 34"><path d="M2 6H22M16 6V20H24M12 6V2" fill="none" stroke="#b0b0b0" stroke-width="4" /><path d="M20 24H28L24 32Z" fill="#a0a0a0" /></svg>
            <svg class="ml-[37px] w-[34px] h-[36px] -mt-[4px]" viewBox="0 0 34 36"><path d="M6 1L8 6L13 3L11 8L16 9L11 11L13 16L8 13L5 18L5 12L0 11L5 9Z" fill="#b0b0b0" /><path d="M23 11L33 17V29L23 35L13 29V17ZM13 17L23 23L33 17M23 23V35" fill="none" stroke="#b0b0b0" stroke-width="2" /></svg>
            <svg class="ml-[34px] w-[32px] h-[32px] -mt-[6px]" viewBox="0 0 32 32"><path d="M8 9A8 8 0 0 1 24 9V12H8Z" fill="#c0c0c0" /><path d="M16 12V24" stroke="#c0c0c0" stroke-width="4" /><path d="M0 20H11V25H21V20H32V32H0Z" fill="#777" /></svg>
            <svg class="ml-[22px] w-[28px] h-[32px] -mt-[6px]" viewBox="0 0 28 32"><rect x="6" y="0" width="22" height="27" fill="#b8b8b8" /><path d="M10 3V24M24 3V24" stroke="#232323" stroke-width="2" stroke-dasharray="3 2" /><path d="M1 5V31H20" fill="none" stroke="#b0b0b0" stroke-width="2" stroke-dasharray="3 2" /></svg>
            <svg class="ml-[26px] w-[28px] h-[30px] -mt-[6px]" viewBox="0 0 28 30"><circle cx="12" cy="20" r="9" fill="none" stroke="#2d8ceb" stroke-width="2" /><circle cx="14" cy="17" r="10" fill="none" stroke="#2d8ceb" stroke-width="2" /><circle cx="16" cy="12" r="11" fill="#2a6fc0" stroke="#2d8ceb" stroke-width="2" /></svg>
            <svg class="ml-[37px] w-[30px] h-[32px] -mt-[6px]" viewBox="0 0 30 32"><rect x="1" y="4" width="28" height="27" fill="none" stroke="#b0b0b0" stroke-width="2" /><path d="M7 0V4M15 0V4M23 0V4" stroke="#b0b0b0" stroke-width="2" /><path d="M6 10C15 10 13 24 24 25" fill="none" stroke="#b0b0b0" stroke-width="2" /></svg>
          </div>
          <div class="h-[2px] bg-black"></div>
          <div class="h-[34px] pt-[3px] bg-[#333] flex items-center text-[18px] text-[#8c8c8c]">
            <svg class="ml-[14px] w-[20px] h-[14px]"><use href="#eye" /></svg>
            <svg class="ml-[11px] w-[20px] h-[22px]" viewBox="0 0 20 22"><path d="M0 7H5L11 1V21L5 15H0Z" fill="#b0b0b0" /><path d="M14 5A8 8 0 0 1 14 17" fill="none" stroke="#b0b0b0" stroke-width="2" /></svg>
            <div class="ml-[9px] w-[12px] h-[14px] rounded-full bg-[#b0b0b0]"></div>
            <svg class="ml-[14px] w-[18px] h-[22px]" viewBox="0 0 18 22"><path d="M4 10V6A5 5 0 0 1 14 6V10" fill="none" stroke="#b0b0b0" stroke-width="2.5" /><path d="M1 10H17V22H1Z" fill="#b0b0b0" /><circle cx="9" cy="15" r="2" fill="#333" /></svg>
            <div class="ml-[15px] w-[2px] h-[24px] bg-[#141414]"></div>
            <svg class="ml-[27px] w-[22px] h-[26px]"><use href="#tag" /></svg>
            <div class="ml-[13px] w-[2px] h-[24px] bg-[#141414]"></div>
            <span class="ml-[12px] w-[57px]">#</span>
            <div class="w-[2px] h-[24px] bg-[#141414]"></div>
            <span class="ml-[10px] w-[248px]">Layer Name</span>
            <div class="w-[2px] h-[24px] bg-[#141414]"></div>
            <svg class="ml-[8px] w-[24px] h-[20px]"><use href="#shy" /></svg>
            <svg class="ml-[8px] w-[18px] h-[18px] text-[#b8b8b8]"><use href="#sun" /></svg>
            <svg class="ml-[10px] w-[22px] h-[20px]" viewBox="0 0 22 20"><path d="M2 1L20 19" stroke="#b0b0b0" stroke-width="2" stroke-dasharray="4 2" /></svg>
            <span class="ml-[10px] w-[20px] italic font-['Liberation_Serif',serif] text-[24px] text-[#b8b8b8]">fx</span>
            <svg class="ml-[7px] w-[24px] h-[22px]" viewBox="0 0 24 22"><rect width="24" height="22" fill="#b8b8b8" /><rect x="5" y="4" width="14" height="14" fill="#333" /><path d="M2 2V20M22 2V20" stroke="#333" stroke-width="2" stroke-dasharray="2 2" /></svg>
            <svg class="ml-[7px] w-[24px] h-[24px]"><use href="#stack" /></svg>
            <svg class="ml-[7px] w-[22px] h-[22px]" viewBox="0 0 22 22"><circle cx="11" cy="11" r="10" fill="#b8b8b8" /><path d="M4 19L18 3" stroke="#333" stroke-width="2" /></svg>
            <svg class="ml-[8px] w-[22px] h-[24px]" viewBox="0 0 22 24"><path d="M11 1L21 6V18L11 23L1 18V6ZM1 6L11 11L21 6M11 11V23" fill="none" stroke="#b0b0b0" stroke-width="2" /></svg>
            <div class="ml-[31px] w-[2px] h-[24px] bg-[#141414]"></div>
            <span class="ml-[10px] w-[222px]">Parent &amp; Link</span>
            <div class="w-[2px] h-[24px] bg-[#141414]"></div>
          </div>
          <div class="h-[4px] bg-black border-b-2 border-[#252525]"></div>
          <div id="layer-rows"></div>
        </div>
        <div class="w-[2px] shrink-0 bg-black"></div>

        <!-- graph -->
        <div class="w-[2734px] shrink-0 relative">
          <div class="h-[13px]"></div>
          <div class="h-[20px] bg-black flex items-center relative">
            <div class="ml-[2px] w-[11px] h-[16px] bg-[#2d8ceb] rounded-l-full"></div>
            <div class="w-[2709px] h-[16px] bg-[#6a6a6a]"></div>
            <div class="w-[12px] h-[16px] bg-[#2d8ceb] rounded-r-full"></div>
          </div>
          <div id="ruler" class="h-[40px] relative overflow-hidden text-[18px] text-[#a0a0a0]"></div>
          <div class="h-[30px] bg-black flex items-center">
            <div class="ml-[2px] w-[11px] h-[28px] bg-[#2d8ceb] rounded-l-lg"></div>
            <div class="w-[2708px] h-[28px] bg-[#646464]"></div>
            <div class="w-[11px] h-[28px] bg-[#2d8ceb] rounded-r-lg"></div>
          </div>
          <div class="h-[10px] border-y-2 border-black bg-[#232323]"></div>
          <div id="bars"></div>
          <!-- playhead -->
          <div class="absolute left-[2591px] top-[70px] w-[2px] h-[551px] bg-[#2b85e0]"></div>
          <div class="absolute left-[2591px] top-[105px] w-[5px] h-[6px] bg-[#19c819]"></div>
          <svg class="absolute left-[2580px] top-[43px] w-[22px] h-[26px]" viewBox="0 0 22 26"><path d="M2 0H20L22 2V14L11 26L0 14V2Z" fill="#2d8ceb" /><path d="M8 12H14M11 12V24" stroke="#232323" stroke-width="1.5" /></svg>
        </div>

        <!-- strip -->
        <div class="w-[37px] shrink-0 border-l-2 border-black">
          <div class="h-[73px]"></div>
          <svg class="ml-[6px] w-[22px] h-[28px]" viewBox="0 0 22 28"><path d="M0 0H22V17L11 28L0 17Z" fill="#b0b0b0" /></svg>
          <div class="h-[12px]"></div>
          <svg class="ml-[1px] w-[30px] h-[26px]" viewBox="0 0 30 26"><path d="M16 0V20L2 16Z" fill="none" stroke="#b0b0b0" stroke-width="2" /><rect x="16" y="5" width="12" height="14" fill="#b0b0b0" /><circle cx="13" cy="19" r="5" fill="#232323" stroke="#b0b0b0" stroke-width="2" /></svg>
          <div class="mt-[8px] ml-[1px] w-[31px] h-[144px] bg-[#333] rounded-[15px]"></div>
        </div>
      </div>

      <!-- footer -->
      <div class="h-[31px] border-t-2 border-black flex items-center">
        <svg class="ml-[15px] w-[22px] h-[28px]" viewBox="0 0 22 28"><path d="M1 1H14V20H1ZM5 6V26H21V9H5" fill="none" stroke="#2d8ceb" stroke-width="2.5" /></svg>
        <svg class="ml-[14px] w-[24px] h-[26px]" viewBox="0 0 24 26"><circle cx="9" cy="9" r="8" fill="none" stroke="#b0b0b0" stroke-width="2" /><rect x="10" y="10" width="12" height="15" fill="#232323" stroke="#b0b0b0" stroke-width="2" /></svg>
        <svg class="ml-[13px] w-[24px] h-[26px]" viewBox="0 0 24 26"><path d="M8 0H16V8L22 13L16 18V26H8V18L2 13L8 8Z" fill="#8f8f8f" /></svg>
        <div class="ml-[420px] w-[267px] h-[29px] mt-[2px] bg-[#2a2a2a] rounded-t-md flex items-center justify-center text-[21px] text-[#9a9a9a] whitespace-nowrap">Toggle Switches / Modes</div>
        <svg class="ml-[281px] w-[18px] h-[11px]" viewBox="0 0 18 11"><path d="M9 0L18 11H0Z" fill="#b0b0b0" /></svg>
        <div class="ml-[25px] w-[20px] h-[20px] rounded-full border-[3px] border-[#b0b0b0]"></div>
        <div class="w-[74px] h-[2px] bg-[#666]"></div>
        <svg class="ml-[22px] w-[34px] h-[15px]" viewBox="0 0 34 15"><path d="M0 15L10 3L15 9L22 0L34 15Z" fill="#b0b0b0" /></svg>
      </div>
    </div>

    <script>
      // project list
      const projectRows = [
        { icon: "comp", name: "jodieg_M+M", chip: "bg-[#b0a07f]", type: "Composition", fps: "30", tree: true },
        { icon: "comp", name: "pupil", chip: "bg-[#b0a07f]", type: "Composition", fps: "30", selected: true },
        { icon: "folder", open: true, name: "pupil Layers", chip: "bg-[#e3d84b]", type: "Folder" },
        { icon: "ai", name: "ball/pupil.ai", chip: "bg-[#a9a9cb]", type: "Vector Art", size: "220 KB" },
        { icon: "ai", name: "Layer 1/pupil.ai", chip: "bg-[#a9a9cb]", type: "Vector Art", size: "220 KB" },
        { icon: "ai", name: "pupil/pupil.ai", chip: "bg-[#a9a9cb]", type: "Vector Art", size: "220 KB" },
        { icon: "folder", closed: true, name: "Solids", chip: "bg-[#e3d84b]", type: "Folder" },
      ];
      document.getElementById("project-rows").innerHTML = projectRows
        .map((r) => {
          let head = "";
          if (r.icon === "ai") {
            head = `<div class="ml-[74px] w-[24px] h-[30px] relative shrink-0"><svg class="w-[24px] h-[30px]"><use href="#ai" /></svg><span class="absolute left-[4px] top-[6px] text-[13px] text-[#ff9a00]">Ai</span></div><span class="ml-[14px] w-[159px] whitespace-nowrap">${r.name}</span>`;
          } else if (r.icon === "comp") {
            head = `<svg class="ml-[33px] w-[32px] h-[26px] shrink-0"><use href="#comp" /></svg>${
              r.selected
                ? `<span class="ml-[1px] w-[205px] h-[36px] bg-[#a3a3a3] text-[#0c0c0c] pl-[6px] flex items-center">${r.name}</span>`
                : `<span class="ml-[7px] w-[199px] tracking-[1.2px]">${r.name}</span>`
            }`;
          } else {
            const arrow = r.open
              ? `<svg class="ml-[7px] w-[16px] h-[11px] shrink-0"><use href="#chev" /></svg>`
              : `<svg class="ml-[7px] w-[16px] h-[14px] shrink-0" viewBox="0 0 10 14"><path d="M2 1L8 7L2 13" fill="none" stroke="currentColor" stroke-width="1.6" /></svg>`;
            head = `${arrow}<svg class="ml-[10px] w-[28px] h-[26px] shrink-0"><use href="#folder" /></svg><span class="ml-[8px] w-[202px]">${r.name}</span>`;
          }
          const tree = r.tree
            ? `<svg class="absolute left-[612px] top-[4px] w-[26px] h-[24px]"><use href="#tree" /></svg>`
            : "";
          return `<div class="relative h-[38px] w-[607px] pt-[2px] border-b-2 border-[#1c1c1c] ${r.selected ? "bg-[#333]" : ""} flex items-center text-[21px] whitespace-nowrap">
            ${head}
            <div class="ml-[11px] w-[24px] h-[24px] border-2 border-[#161616] ${r.chip} shrink-0"></div>
            <span class="ml-[24px] w-[154px] text-[#929292]">${r.type}</span>
            <span class="w-[70px] text-[#929292]">${r.size || ""}</span>
            <span class="w-[48px] text-right text-[#929292]">${r.fps || ""}</span>
            ${tree}
          </div>`;
        })
        .join("");

      // comp grid, period values read off the viewer
      const grid = [];
      const add = (x1, y1, x2, y2, cls) =>
        grid.push(`<line x1="${x1}" y1="${y1}" x2="${x2}" y2="${y2}" ${cls} />`);
      const major = 'stroke="#008000" stroke-opacity="0.85" stroke-width="3"';
      const minor = 'stroke="#008000" stroke-opacity="0.45" stroke-width="2"';
      const dots = 'stroke="#008000" stroke-opacity="0.5" stroke-width="1.5" stroke-dasharray="1.5 2.5"';
      for (let x = 0; x <= 1280; x += 20) {
        add(x, 0, x, 720, x % 160 === 0 ? major : x % 80 === 0 ? minor : dots);
      }
      for (let y = 0; y <= 720; y += 20) {
        const p = ((y - 120) % 240 + 240) % 240;
        const green = p === 0 || p === 120;
        const brown = p === 40 || p === 200;
        add(0, y, 1280, y, green ? major : brown ? minor : dots);
      }
      document.getElementById("grid").innerHTML = grid.join("");

      // timeline layers: name, bar from and to (screen x)
      const layers = [
        ["1", "MARSHAL...LUHAN", 1083, 3789, 0],
        ["2", "ARTIFIC...CEPTIONS", 2707, 3803, 1],
        ["3", "INVEST ...IVES WITH", 1930, 2304, 2],
        ["4", "ALL MED...XIST TO", 1883, 2047, 3],
        ["5", "Shape Layer 1", 1083, 3789, 4],
        ["6", "VALUE", 1170, 3803, 5],
        ["7", "Y", 1069, 3675, 6],
        ["8", "R 3", 1069, 3670, 7],
        ["9", "A 2", 1069, 3664, 8],
        ["10", "R 2", 1069, 3659, 9],
        ["11", "T", 1069, 3652, 10],
        ["12", "I", 1069, 3645, 11],
        ["13", "B", 1069, 3634, 12],
        ["14", "R", 1069, 3628, 13],
        ["15", "A", 2987, 3628, 14],
      ];
      const hasStack = (i) => i !== 0 && i !== 2;
      const isShy = (i) => i >= 1 && i <= 4;
      document.getElementById("layer-rows").innerHTML = layers
        .map(([num, name, , , i]) => {
          const blue = i === 4;
          return `<div class="h-[34px] border-b-2 border-[#252525] bg-[#313131] flex items-center">
            <div class="ml-[11px] w-[26px] h-[27px] bg-[#252525] flex items-center justify-center"><svg class="w-[20px] h-[12px]"><use href="#eye" /></svg></div>
            <div class="ml-[34px] w-[26px] h-[27px] bg-[#252525]"></div>
            <div class="ml-[3px] w-[26px] h-[27px] bg-[#252525]"></div>
            <svg class="ml-[23px] w-[9px] h-[14px]" viewBox="0 0 9 14"><path d="M2 1L7 7L2 13" fill="none" stroke="#b0b0b0" stroke-width="1.5" /></svg>
            <div class="ml-[15px] w-[24px] h-[25px] ${blue ? "bg-[#6b7fe0]" : "bg-[#b83a3a]"}"></div>
            <span class="ml-[18px] w-[55px] text-[#a8a8a8]">${num}</span>
            <span class="w-[30px] text-center ${blue ? "text-[28px]" : "font-['Liberation_Serif',serif] text-[27px]"} text-[#b0b0b0]">${blue ? "★" : "T"}</span>
            <span class="ml-[14px] w-[223px] whitespace-nowrap font-semibold text-[#a8a8a8]">${name}</span>
            <div class="w-[26px] h-[27px] bg-[#252525] flex items-center justify-center"><svg class="w-[24px] h-[20px]"><use href="${isShy(i) ? "#shyoff" : "#shy"}" /></svg></div>
            <div class="ml-[4px] w-[26px] h-[27px] bg-[#252525] flex items-center justify-center text-[#6a6a6a]"><svg class="w-[18px] h-[18px]"><use href="#sun" /></svg></div>
            <div class="ml-[4px] w-[26px] h-[27px] bg-[#252525] flex items-center justify-center"><svg class="w-[24px] h-[22px]"><use href="#slash" /></svg></div>
            <div class="ml-[64px] w-[26px] h-[27px] bg-[#252525] flex items-center justify-center">${hasStack(i) ? '<svg class="w-[25px] h-[25px]"><use href="#stack" /></svg>' : ""}</div>
            <div class="ml-[4px] w-[26px] h-[27px] bg-[#252525]"></div>
            <div class="ml-[4px] w-[25px] h-[27px] bg-[#252525]"></div>
            <svg class="ml-[41px] w-[22px] h-[22px]"><use href="#spiral" /></svg>
            <div class="ml-[14px] w-[178px] h-[28px] bg-[#1c1c1c] flex items-center pl-[15px] pr-[10px] justify-between text-[#b8b8b8]"><span>None</span><svg class="w-[14px] h-[10px]"><use href="#chev" /></svg></div>
          </div>`;
        })
        .join("");

      // graph bars, x values are screen px, graph starts at 1069
      const gx = 1069;
      document.getElementById("bars").innerHTML = layers
        .map(([, , from, to, i]) => {
          const fill =
            i === 4
              ? "bg-[#525b8b] border-[#474f7e]"
              : "bg-[#793a3a] border-[#652e2e]";
          return `<div class="relative h-[34px] border-b-2 border-[#292929] bg-[#303030]">
            <div class="absolute top-0 bottom-0 bg-[#3c3c3c]" style="left:14px;width:2707px"></div>
            <div class="absolute top-0 bottom-0 ${fill} border-b-[3px] border-r-2" style="left:${from - gx}px;width:${to - from}px"></div>
          </div>`;
        })
        .join("");

      // ruler, 180.46 px per two seconds
      const ruler = [];
      for (let s = 0; s <= 30; s += 2) {
        const x = 3790 - (30 - s) * 90.23 - gx;
        const label = s === 0 ? "0:00s" : String(s).padStart(2, "0") + "s";
        const shift = s === 30 ? x - 4 : x;
        ruler.push(`<span class="absolute top-[8px] -translate-x-1/2" style="left:${shift}px">${label}</span>`);
        ruler.push(`<div class="absolute bottom-[2px] w-[2px] h-[10px] bg-[#8a8a8a]" style="left:${x}px"></div>`);
      }
      document.getElementById("ruler").innerHTML = ruler.join("");
    </script>
  </body>
</html>
